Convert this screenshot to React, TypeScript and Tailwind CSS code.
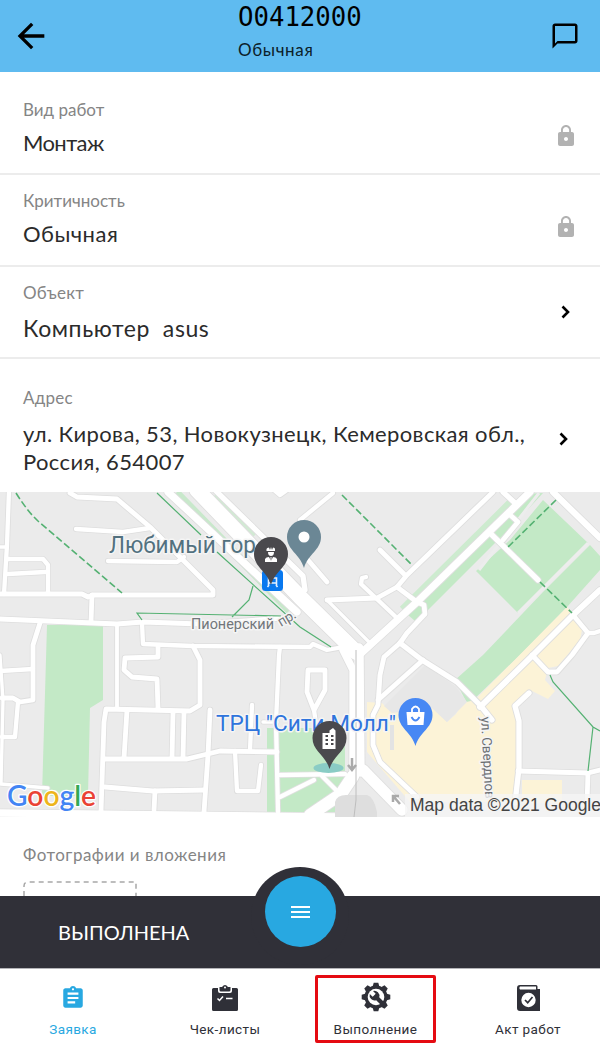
import type { ReactNode } from "react";
import { MdArrowBack, MdAssignment, MdChatBubbleOutline, MdLock } from "react-icons/md";

const roads: [string, number][] = [
  ["M9 490L7 545L4 594", 4], ["M0 547H6", 3],
  ["M70 493L77 497L117 499L150 527L182 559L213 590V595L93 595L88 597L82 594L0 594", 4.5],
  ["M76 529L123 532L150 528", 4], ["M108 561L177 562L184 557", 4],
  ["M8 559H43L48 565V592", 4], ["M8 574L45 572", 4], ["M92 595L91 622", 4.5],
  ["M0 619L117 624L143 622L200 624L285 618", 4.5],
  ["M142 623L143 644L193 646L310 647L313 644L327 650L343 647", 4],
  ["M40 623L33 645L33 700L20 702L13 698H2", 4.5], ["M117 624L117 707", 3.5],
  ["M158 647V657L125 658L124 670L132 677L157 679L158 708", 4.5],
  ["M193 646L200 660V705L190 711L106 709L104 722L101 812", 4.5],
  ["M280 647L279 655L276 722L278 812", 4], ["M0 671L33 669", 4],
  ["M0 655L3 700L1 784L48 788", 3], ["M18 702L15 737L2 737", 4],
  ["M127 710L124 758", 4.5], ["M173 713L172 758", 4.5], ["M184 713L183 758", 4.5],
  ["M104 759L187 759L220 751L277 752", 4.5], ["M210 710L208 755L204 812", 4.5],
  ["M252 705L250 750", 4], ["M235 751L237 791H258L261 765", 4],
  ["M105 787L153 791L205 790", 4.5], ["M155 791L154 810", 4.5], ["M263 722H277", 3],
  ["M280 775L345 774", 4], ["M280 797L314 780", 4], ["M322 776L336 790", 4],
  ["M300 520L333 493", 4], ["M308 560L327 582", 4.5], ["M380 550L405 575", 4.5],
  ["M493 492L407 575L397 587L377 598L327 600", 4.5], ["M327 600L372 645", 3],
  ["M366 577L362 578L361 584L397 618", 4],
  ["M397 587L417 602L424 605L425 614L407 633L400 643L384 657L380 675L378 705L373 715V745L380 762L417 797", 4.5],
  ["M530 492L417 602L357 657", 7], ["M400 643L422 660L457 682L480 705L492 720", 5],
  ["M423 660L378 700", 4.5], ["M503 492L515 503", 5], ["M509 514L518 522L503 540", 4.5],
  ["M490 533L538 580", 5], ["M553 492L600 538", 6], ["M600 590L573 615L533 655L480 707", 5.5],
  ["M573 615L588 633L572 655L557 672H548L532 655", 4.5], ["M588 633H594L600 631", 4],
  ["M529 693L515 706L519 721V768L515 803", 5], ["M518 771L588 773L600 770", 4.5], ["M588 773L587 803", 4.5],
  ["M308 670H325V690L314 710L307 692Z", 4.5], ["M314 710L316 724", 4],
  ["M168 492L297 612", 7], ["M274 490L280 495L287 490", 4],
  ["M215 490L303 576L305 590", 5],
  ["M197 490L300 597L356 652", 15],
  ["M343 650L353 670V778", 7], ["M359 648L360 772", 9], ["M363 770L402 810", 11],
  ["M353 776L341 794L310 815", 12], ["M0 813L340 817", 7],
];

function Pin({ x, y, color, children }: { x: number; y: number; color: string; children: ReactNode }) {
  return (
    <g transform={`translate(${x} ${y})`}>
      <path d="M0 0C-4 -14 -17 -18 -17 -31A17 17 0 0 1 17 -31C17 -18 4 -14 0 0Z" fill={color} />
      {children}
    </g>
  );
}

function CityMap() {
  return (
    <svg viewBox="0 492 600 325" className="block h-[325px] w-full">
      <rect y="492" width="600" height="325" fill="#ebebeb" />
      <g fill="#c3e9c6">
        <path d="M47 625H103V700L90 708L88 796H42Z" />
        <path d="M267 728H345V812H267Z" />
        <path d="M543 500L588 543L518 613L476 571L510 540Z" />
        <path d="M590 545L600 556V570L567 607L520 655L468 705L455 680L483 655L543 592Z" />
        <path d="M525 494L543 493L507 532L498 540L428 610L415 621L408 615L488 537Z" />
      </g>
      <path d="M512 500L402 609" stroke="#cdebcf" strokeWidth="6" />
      <path d="M176 493L290 610" stroke="#c8e8cb" strokeWidth="9" />
      <path d="M214 496L255 535" stroke="#d2ead4" strokeWidth="4" />
      <path d="M539 493L479 570M588 543L518 613" stroke="#ededed" strokeWidth="3" />
      <g fill="#fcf3d7">
        <path d="M567 607L583 625L580 640L558 666L548 668L545 680L555 691L548 699L530 690L516 702L519 720L516 802H410L367 752V702L382 703L390 711L432 708L447 722L456 714L462 703L475 700Z" />
        <path d="M522 780H562V803H522Z" />
      </g>
      <path d="M384 706L425 665L456 687L467 702L447 722L432 708L392 713Z" fill="#e7e7e7" />
      <g fill="none" stroke="#dedede" strokeLinecap="round" strokeLinejoin="round">
        {roads.map(([d, w], i) => <path key={i} d={d} strokeWidth={w + 2} />)}
      </g>
      <g fill="none" stroke="#fff" strokeLinecap="round" strokeLinejoin="round">
        {roads.map(([d, w], i) => <path key={i} d={d} strokeWidth={w + 0.3} />)}
      </g>
      <path d="M335 817V802Q337 795 346 795H367Q374 797 377 812V817Z" fill="#dedede" />
      <path d="M392 725V750" stroke="#e3e3e3" strokeWidth="4" />
      <path d="M356 650V800L354 817" stroke="#bebebe" fill="none" />
      <path d="M352 758V769M348 765L352 770L356 765" stroke="#aaa" strokeWidth="2.5" fill="none" />
      <path d="M400 804L394 797M393 802V796H399" stroke="#aaa" strokeWidth="2.5" fill="none" />
      <g fill="none" stroke="#54b172" strokeWidth="1.2">
        <path d="M157 493L201 535M217 552L300 627L331 647" />
        <path d="M142 620L137 613L281 616M253 586L249 600L232 617" />
        <path d="M550 675L553 682L593 727L600 731M593 727L588 771" />
        <path d="M16 493Q28 512 38 521L122 593M342 495L412 565M556 500L508 547M540 582L572 613" strokeDasharray="7 3" strokeWidth="1.6" />
      </g>
      <g stroke="#f5f5f5" strokeWidth="3" strokeLinejoin="round" style={{ paintOrder: "stroke" }} fontFamily="Roboto, sans-serif">
        <text x="109" y="552.5" fontSize="23.5" fill="#52717f" textLength="147" lengthAdjust="spacingAndGlyphs">Любимый гор</text>
        <text x="191" y="629" fontSize="14" fill="#72777b" textLength="83" lengthAdjust="spacingAndGlyphs">Пионерский</text>
        <text transform="translate(281 627) rotate(-31)" fontSize="14" fill="#72777b" textLength="19">пр.</text>
        <text x="216" y="731" fontSize="22.5" fill="#2f74dc" textLength="180" lengthAdjust="spacingAndGlyphs">ТРЦ "Сити Молл"</text>
        <text transform="translate(481 717) rotate(87)" fontSize="13.500" fill="#6c6f73" textLength="82" lengthAdjust="spacingAndGlyphs">ул. Свердлов</text>
      </g>
      <g transform="translate(262 570)">
        <rect width="21" height="21" rx="3.5" fill="#0878ef" />
        <path d="M6.500 15V8H14.500V15M6.500 13H14.500M7 15L5.500 17M14 15L15.500 17" stroke="#e3f0ff" strokeWidth="1.600" fill="none" />
      </g>
      <ellipse cx="328.500" cy="768" rx="15" ry="5" fill="#8accc5" />
      <Pin x={304} y={568} color="#6b8795"><circle cy="-31" r="5.500" fill="#fff" /></Pin>
      <Pin x={271} y={585} color="#4a494d">
        <g fill="#fff">
          <path d="M-4.500 -34V-36Q-4 -37.500 -2 -37.500L-1 -35L0 -38L1 -35L2 -37.500Q4 -37.500 4 -36V-34Z" />
          <path d="M-3 -33H3Q3 -29 0 -29T-3 -33Z" />
          <path d="M-6 -23V-26Q-5 -28 -2 -28L0 -24L2 -28Q5 -28 6 -26V-23Z" />
        </g>
        <path d="M0 -28V-24" stroke="#fff" />
      </Pin>
      <Pin x={329.5} y={769} color="#4a494d">
        <path d="M-7 -20V-36H0V-38.500L3.500 -41L6 -38.500V-20Z" fill="#fff" />
        <path d="M-4 -33H-1.500M1.500 -33H4M-4 -29H-1.500M1.500 -29H4M-4 -25H-1.500M1.500 -25H4" stroke="#4a494d" strokeWidth="1.800" />
      </Pin>
      <Pin x={415.500} y={746} color="#4788f4">
        <path d="M-9 -34H9L8 -21H-8Z" fill="#fff" />
        <path d="M-3.500 -34V-37Q0 -42 3.500 -37V-34" stroke="#fff" strokeWidth="1.800" fill="none" />
        <path d="M-4 -29Q0 -22 4 -29" stroke="#4788f4" strokeWidth="1.800" fill="none" />
      </Pin>
      <text x="7" y="806" fontSize="28.500" textLength="89" lengthAdjust="spacingAndGlyphs" fontFamily="Lato, sans-serif" fontWeight="600" stroke="#fff" strokeWidth="2.500" strokeLinejoin="round" style={{ paintOrder: "stroke" }}>
        <tspan fill="#4285f4">G</tspan><tspan fill="#ea4335">o</tspan><tspan fill="#edb51c">o</tspan><tspan fill="#4285f4">g</tspan><tspan fill="#34a853">l</tspan><tspan fill="#ea4335">e</tspan>
      </text>
      <rect x="405" y="794" width="195" height="23" fill="#f5f5f5" fillOpacity=".8" />
      <text x="410" y="811" fontSize="17.500" textLength="191" lengthAdjust="spacingAndGlyphs" fill="#444" fontFamily="Liberation Sans, sans-serif">Map data ©2021 Google</text>
    </svg>
  );
}

function Chevron() {
  return (
    <svg viewBox="0 0 10 14" className="h-[14px] w-[10px]">
      <path d="M1.500 1.500L7 7L1.500 12.500" stroke="#000" strokeWidth="2.600" fill="none" />
    </svg>
  );
}

const label = "text-[17px] leading-[20px] text-[#858585]";
const value = "leading-[28px] text-[#2b2b2b]";

function ChecklistIcon() {
  return (
    <svg viewBox="0 0 26 26" className="size-[26px]">
      <path d="M1.500 3H6V6Q6 8 8 8H18Q20 8 20 6V3H24.500Q26 3 26 4.500V24.500Q26 26 24.500 26H1.500Q0 26 0 24.500V4.500Q0 3 1.500 3Z" fill="#2f3038" />
      <path d="M7.500 2H10Q13 -2 16 2H18.500V5Q18.500 6.500 17 6.500H9Q7.500 6.500 7.500 5Z" fill="#2f3038" />
      <circle cx="13" cy="2.500" r="1" fill="#fff" />
      <path d="M5.500 13.500L7.500 15.500L11 11.500M14 13.500H20.500" fill="none" stroke="#fff" strokeWidth="1.500" />
    </svg>
  );
}

function ServiceIcon() {
  return (
    <svg viewBox="-15 -15 30 30" className="size-[30px]">
      <g fill="#2f3038">
        {[0, 45, 90, 135, 180, 225, 270, 315].map((a) => (
          <path key={a} d="M-3.500 -10L-2.300 -14.300H2.300L3.500 -10Z" transform={`rotate(${a})`} />
        ))}
        <circle r="11.500" />
      </g>
      <circle r="8.300" fill="#fff" />
      <path d="M-6.200 -3L-3.300 -.3L-.3 -3.200L-3 -6A5 5 0 0 1 3.200 .2L9 6L6 9L.2 3.200A5 5 0 0 1 -6.200 -3Z" fill="#2f3038" />
    </svg>
  );
}

function ActIcon() {
  return (
    <svg viewBox="0 0 23 26" className="h-[26px] w-[23px]">
      <path d="M3 0H19Q20.500 0 20.500 1.500V4H23V26H3Q0 26 0 23V3Q0 0 3 0Z" fill="#2f3038" />
      <path d="M3 1.500H19V4.500H3Q1.500 3 3 1.500Z" fill="#fff" />
      <circle cx="11.500" cy="15" r="7.200" fill="#fff" />
      <path d="M8 15L10.700 17.700L15.500 12" fill="none" stroke="#2f3038" strokeWidth="1.700" />
    </svg>
  );
}

export default function App() {
  return (
    <div className="flex h-[1047px] w-[600px] flex-col overflow-hidden bg-white font-['Lato','Open_Sans',sans-serif]">
      <header className="flex h-[71.5px] shrink-0 items-start bg-[#5fbbf0] text-black">
        <MdArrowBack className="mt-[16px] ml-[11px] size-[40px]" />
        <div className="ml-[187px] flex flex-1 flex-col">
          <span className="mt-[2px] font-['DejaVu_Sans_Mono',monospace] text-[25.700px] leading-[30px]">O0412000</span>
          <span className="mt-[8px] text-[17px] leading-[20px] tracking-[.65px] text-[#0b2029]">Обычная</span>
        </div>
        <MdChatBubbleOutline className="mt-[21px] mr-[20px] size-[30px]" />
      </header>
      <section className="flex h-[103.500px] shrink-0 justify-between border-b-2 border-[#ececec] pt-[28.500px] pr-[22px] pl-[23px]">
        <div><p className={label}>Вид работ</p><p className={"mt-[9px] text-[22px] tracking-[-.6px] " + value}>Монтаж</p></div>
        <MdLock className="mt-[24px] size-[24px] text-[#b2b2b2]" />
      </section>
      <section className="flex h-[92px] shrink-0 justify-between border-b-2 border-[#ececec] pt-[16px] pr-[22px] pl-[23px]">
        <div><p className={label}>Критичность</p><p className={"mt-[9px] text-[22px] tracking-[.5px] " + value}>Обычная</p></div>
        <MdLock className="mt-[24px] size-[24px] text-[#b2b2b2]" />
      </section>
      <section className="flex h-[92px] shrink-0 justify-between border-b-2 border-[#ececec] pt-[16px] pr-[29px] pl-[23px]">
        <div><p className={"tracking-[.3px] " + label}>Объект</p><p className={"mt-[11px] text-[23px] tracking-[.6px] whitespace-pre " + value}>Компьютер  asus</p></div>
        <div className="mt-[22px]"><Chevron /></div>
      </section>
      <section className="flex h-[133px] shrink-0 justify-between pt-[29px] pr-[31px] pl-[23px]">
        <div className="whitespace-nowrap"><p className={"tracking-[.2px] " + label}>Адрес</p><p className={"mt-[12px] text-[22px] tracking-[.380px] " + value}>ул. Кирова, 53, Новокузнецк, Кемеровская обл.,<br />Россия, 654007</p></div>
        <div className="mt-[44px]"><Chevron /></div>
      </section>
      <CityMap />
      <section className="h-[79px] shrink-0 overflow-hidden pt-[28px] pl-[23px]">
        <p className={"tracking-[.5px] " + label}>Фотографии и вложения</p>
        <svg viewBox="0 0 114 24" className="mt-[16px] h-[24px] w-[114px]">
          <path d="M1 24V5Q1 1 5 1H113V24" fill="none" stroke="#a8a8a8" strokeWidth="1.500" strokeDasharray="5 4" />
        </svg>
      </section>
      <div className="relative flex h-[73px] shrink-0 items-center border-b border-[#b4b4b8] bg-[#303038] pl-[58px]">
        <span className="relative z-10 text-[20px] leading-[24px] text-white">ВЫПОЛНЕНА</span>
        <div className="absolute -top-[29px] left-[251px] size-[98px] rounded-full bg-[#303038]" />
        <div className="absolute -top-[20px] left-[265px] flex size-[71px] flex-col items-center justify-center gap-[3px] rounded-full bg-[#28a8e1]">
          <i className="h-[2px] w-[19px] bg-white" /><i className="h-[2px] w-[19px] bg-white" /><i className="h-[2px] w-[19px] bg-white" />
        </div>
      </div>
      <nav className="flex h-[78px] shrink-0 font-[Roboto,sans-serif] text-[13.500px] leading-[16px] tracking-[.4px] text-[#2f3038]">
        <div className="flex w-[146px] shrink-0 flex-col items-center pt-[16px] text-[#28a8e1]">
          <MdAssignment className="size-[26px]" /><span className="mt-[10px]">Заявка</span>
        </div>
        <div className="flex w-[158px] shrink-0 flex-col items-center pt-[16px]"><ChecklistIcon /><span className="mt-[10px]">Чек-листы</span></div>
        <div className="ml-[11px] mt-[6px] flex h-[68px] w-[121px] shrink-0 flex-col items-center rounded-[2px] border-[3px] border-[#e50b12] pt-[4px]"><ServiceIcon /><span className="mt-[9px]">Выполнение</span></div>
        <div className="ml-[20px] flex w-[144px] shrink-0 flex-col items-center pt-[16px]"><ActIcon /><span className="mt-[10px]">Акт работ</span></div>
      </nav>
    </div>
  );
}
